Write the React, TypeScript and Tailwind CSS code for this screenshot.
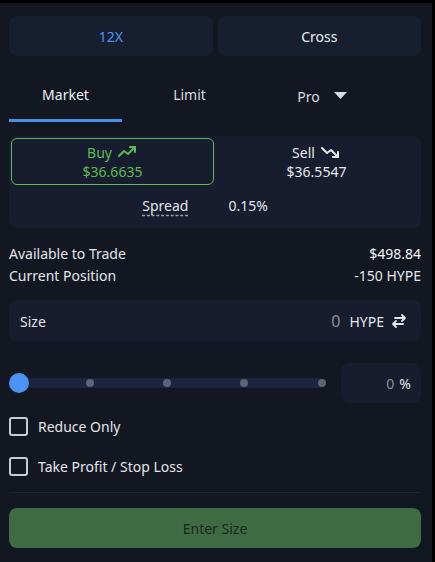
import React from 'react';

const font = { fontFamily: '"Noto Sans", "Open Sans", sans-serif' };

const TrendUp = () => (
  <svg width="20" height="14" viewBox="0 0 20 14" fill="none" stroke="currentColor" strokeWidth="2" strokeLinecap="round" strokeLinejoin="round">
    <path d="M1 11l5-5 4 3 7-7" />
    <path d="M12 2h5v5" />
  </svg>
);

const TrendDown = () => (
  <svg width="20" height="14" viewBox="0 0 20 14" fill="none" stroke="currentColor" strokeWidth="2" strokeLinecap="round" strokeLinejoin="round">
    <path d="M1 3l5 5 4-3 7 7" />
    <path d="M12 12h5V7" />
  </svg>
);

const SwapIcon = () => (
  <svg width="16" height="14" viewBox="0 0 16 14" fill="none" stroke="currentColor" strokeWidth="1.8" strokeLinecap="round" strokeLinejoin="round">
    <path d="M4 4h10M11 1l3 3-3 3" />
    <path d="M12 10H2M5 7l-3 3 3 3" />
  </svg>
);

const Checkbox: React.FC<{ label: string }> = ({ label }) => (
  <div className="flex items-center gap-[10px]">
    <div className="h-[19px] w-[19px] rounded-[3px] border-2 border-[#c9ccd3]" />
    <span className="text-[14px] text-[#e3e5ea]">{label}</span>
  </div>
);

export default function App() {
  return (
    <div className="h-[562px] w-[435px] bg-black pt-[3px] pr-[3px]" style={font}>
      <div className="flex h-[559px] flex-col bg-[#131722] pl-[9px] pr-[11px] pt-[13px]">
        <div className="flex gap-[5px]">
          <div className="flex h-[40px] flex-1 items-center justify-center rounded-[8px] bg-[#171e30] text-[14px] text-[#4d90f0]">
            12X
          </div>
          <div className="flex h-[40px] flex-1 items-center justify-center rounded-[8px] bg-[#171e30] text-[14px] text-[#eceef2]">
            Cross
          </div>
        </div>

        <div className="mt-[21px] flex h-[45px] text-[14px]">
          <div className="flex w-[113px] flex-col items-center justify-between">
            <span className="pt-[7px] text-[#f0f2f5]">Market</span>
            <div className="h-[3px] w-full bg-[#4a90e2]" />
          </div>
          <div className="flex w-[135px] justify-center pt-[7px] text-[#d8dbe1]">Limit</div>
          <div className="flex w-[130px] items-start justify-center gap-[14px] pt-[9px] text-[#d8dbe1]">
            <span>Pro</span>
            <svg width="13" height="8" viewBox="0 0 13 8" className="mt-[6px]">
              <path d="M0 0h13L6.5 7z" fill="#d8dbe1" />
            </svg>
          </div>
        </div>

        <div className="mt-[14px] flex h-[92px] flex-col rounded-[8px] bg-[#171c2e] p-[2px]">
          <div className="flex">
            <div className="flex h-[47px] w-[203px] flex-col items-center justify-center rounded-[6px] border border-[#5cbb52] text-[14px] leading-[19px] text-[#5cbb52]">
              <div className="flex items-center gap-[6px]">
                <span>Buy</span>
                <TrendUp />
              </div>
              <span>$36.6635</span>
            </div>
            <div className="flex h-[47px] flex-1 flex-col items-center justify-center text-[14px] leading-[19px] text-[#e6e8ec]">
              <div className="flex items-center gap-[6px]">
                <span>Sell</span>
                <TrendDown />
              </div>
              <span>$36.5547</span>
            </div>
          </div>
          <div className="flex flex-1 items-center justify-center gap-[40px] pr-[20px] text-[14px] text-[#e3e5ea]">
            <span className="underline decoration-dashed decoration-[#9aa0ab] underline-offset-[4px]">Spread</span>
            <span>0.15%</span>
          </div>
        </div>

        <div className="mt-[16px] flex flex-col gap-[3px] text-[14px] leading-[19px] text-[#e3e5ea]">
          <div className="flex justify-between">
            <span>Available to Trade</span>
            <span className="text-[#f3f4f6]">$498.84</span>
          </div>
          <div className="flex justify-between">
            <span>Current Position</span>
            <span>-150 HYPE</span>
          </div>
        </div>

        <div className="mt-[15px] flex h-[42px] items-center rounded-[8px] bg-[#171c2e] pl-[11px] pr-[14px] text-[14px]">
          <span className="flex-1 text-[#e3e5ea]">Size</span>
          <span className="mr-[9px] text-[16px] text-[#8a909b]">0</span>
          <span className="mr-[7px] text-[#e3e5ea]">HYPE</span>
          <span className="text-[#e3e5ea]">
            <SwapIcon />
          </span>
        </div>

        <div className="mt-[21px] flex items-center gap-[16px]">
          <div className="relative flex h-[40px] flex-1 items-center">
            <div className="h-[10px] w-full rounded-full bg-[#1c2540]" />
            <div className="absolute left-0 top-[10px] h-[20px] w-[20px] rounded-full bg-[#4a93f5]" />
            <div className="absolute left-[77px] top-[16px] h-[8px] w-[8px] rounded-full bg-[#5d6474]" />
            <div className="absolute left-[154px] top-[16px] h-[8px] w-[8px] rounded-full bg-[#5d6474]" />
            <div className="absolute left-[231px] top-[16px] h-[8px] w-[8px] rounded-full bg-[#5d6474]" />
            <div className="absolute left-[309px] top-[16px] h-[8px] w-[8px] rounded-full bg-[#5d6474]" />
          </div>
          <div className="flex h-[40px] w-[80px] items-center justify-end gap-[5px] rounded-[8px] bg-[#171c2e] pr-[10px] text-[14px]">
            <span className="text-[#8a909b]">0</span>
            <span className="text-[#e3e5ea]">%</span>
          </div>
        </div>

        <div className="mt-[13px] flex flex-col gap-[19px]">
          <Checkbox label="Reduce Only" />
          <Checkbox label="Take Profit / Stop Loss" />
        </div>

        <div className="mt-[15px] h-px bg-[#1f2433]" />

        <div className="mt-[15px] flex h-[40px] items-center justify-center rounded-[8px] bg-[#3f6b42] text-[14px] text-[#1c2620]">
          Enter Size
        </div>
      </div>
    </div>
  );
}
